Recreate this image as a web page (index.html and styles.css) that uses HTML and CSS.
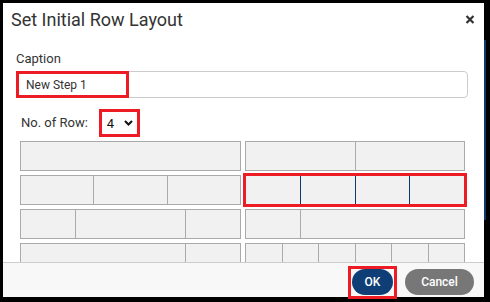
FILE: index.html
```html
<!DOCTYPE html>
<html lang="en">
<head>
    <meta charset="UTF-8">
    <meta name="viewport" content="width=device-width, initial-scale=1.0">
    <title>Set Initial Row Layout</title>
    <link rel="stylesheet" href="styles.css">
</head>
<body>

<div class="page-strip"></div>

<div class="dialog">
    <header class="dialog-header">
        <h1 class="dialog-title">Set Initial Row Layout</h1>
        <button class="close-btn" title="Close">
            <svg width="10" height="9" viewBox="0 0 10 9">
                <path d="M1.5 1 L8.5 8 M8.5 1 L1.5 8" stroke="#333" stroke-width="2.2" fill="none"/>
            </svg>
        </button>
    </header>

    <div class="dialog-body">
        <label class="field-label" for="caption">Caption</label>
        <div class="caption-field">
            <input type="text" id="caption" class="caption-input" value="New Step 1">
            <span class="mark mark-caption"></span>
        </div>

        <div class="rows-field">
            <span class="rows-label">No. of Row:</span>
            <div class="row-select">
                <span>4</span>
                <svg width="9" height="6" viewBox="0 0 9 6">
                    <path d="M1 1 L4.5 4.5 L8 1" stroke="#111" stroke-width="2" fill="none"/>
                </svg>
            </div>
        </div>

        <div class="layout-grid">
            <div class="layout-option">
                <div class="cell"></div>
            </div>
            <div class="layout-option">
                <div class="cell"></div><div class="cell"></div>
            </div>
            <div class="layout-option">
                <div class="cell"></div><div class="cell"></div><div class="cell"></div>
            </div>
            <div class="layout-option selected">
                <div class="cell"></div><div class="cell"></div><div class="cell"></div><div class="cell"></div>
            </div>
            <div class="layout-option">
                <div class="cell"></div><div class="cell w2"></div><div class="cell"></div>
            </div>
            <div class="layout-option">
                <div class="cell"></div><div class="cell w3"></div>
            </div>
            <div class="layout-option">
                <div class="cell w3"></div><div class="cell"></div>
            </div>
            <div class="layout-option">
                <div class="cell"></div><div class="cell"></div><div class="cell"></div>
                <div class="cell"></div><div class="cell"></div><div class="cell"></div>
            </div>
        </div>
    </div>

    <footer class="dialog-footer">
        <span class="btn-wrap">
            <button class="btn btn-ok">OK</button>
            <span class="mark mark-ok"></span>
        </span>
        <button class="btn btn-cancel">Cancel</button>
    </footer>
</div>

</body>
</html>
```

FILE: styles.css
```css
body {
    margin: 0;
    padding: 3px 6px 5px 3px;
    background-color: #000;
    font-family: Roboto, 'Liberation Sans', sans-serif;
    color: #333;
    position: relative;
}

.page-strip {
    position: absolute;
    left: 484px;
    top: 40px;
    width: 2px;
    height: 180px;
    background-color: #0d3a6b;
}

.dialog {
    width: 481px;
    height: 294px;
    background-color: #fff;
    display: flex;
    flex-direction: column;
}

.dialog-header {
    display: flex;
    justify-content: space-between;
    align-items: flex-start;
    padding: 6px 9px 0 8px;
}

.dialog-title {
    margin: 0;
    font-size: 18px;
    font-weight: 400;
    line-height: 22px;
    color: #333;
}

.close-btn {
    border: none;
    background: none;
    padding: 0;
    margin-top: 6px;
    width: 10px;
    height: 9px;
    display: flex;
    cursor: pointer;
}

.dialog-body {
    flex: 1;
    overflow: hidden;
    padding: 20px 16px 0 13px;
}

.field-label {
    display: block;
    font-size: 13px;
    line-height: 16px;
}

.caption-field {
    position: relative;
    margin-top: 4px;
}

.caption-input {
    display: block;
    box-sizing: border-box;
    width: 100%;
    height: 27px;
    border: 1px solid #ccc;
    border-radius: 4px;
    padding: 0 9px;
    font-family: Roboto, 'Liberation Sans', sans-serif;
    font-size: 12px;
    color: #333;
}

.mark {
    position: absolute;
    border: 3px solid #ed1c24;
    box-sizing: border-box;
}

.mark-caption {
    left: 0;
    top: 0;
    width: 113px;
    height: 27px;
}

.rows-field {
    display: flex;
    align-items: center;
    margin-top: 11px;
    padding-left: 5px;
    height: 28px;
}

.rows-label {
    font-size: 13px;
    line-height: 16px;
}

.row-select {
    box-sizing: border-box;
    width: 41px;
    height: 28px;
    margin-left: 11px;
    border: 3px solid #ed1c24;
    display: flex;
    align-items: center;
    justify-content: space-between;
    padding: 0 4px 0 5px;
    font-size: 13px;
    color: #111;
}

.layout-grid {
    display: grid;
    grid-template-columns: 221px 220px;
    grid-auto-rows: 30px;
    gap: 4px;
    margin: 4px 0 0 4px;
}

.layout-option {
    display: flex;
    border: 1px solid #aaa;
    background-color: #f1f1f1;
    box-sizing: border-box;
}

.cell {
    flex: 1;
    border-left: 1px solid #aaa;
}

.cell:first-child {
    border-left: none;
}

.cell.w2 {
    flex: 2;
}

.cell.w3 {
    flex: 3;
}

.layout-option.selected {
    outline: 3px solid #ed1c24;
    outline-offset: -1px;
}

.layout-option.selected .cell {
    border-left-color: #0d3a6b;
}

.layout-option.selected .cell:first-child {
    border-left: none;
}

.dialog-footer {
    height: 35px;
    box-sizing: border-box;
    border-top: 1px solid #ccc;
    background-color: #f8f8f8;
    display: flex;
    align-items: flex-start;
    justify-content: flex-end;
    gap: 12px;
    padding: 6px 10px 0;
}

.btn-wrap {
    position: relative;
    display: flex;
}

.mark-ok {
    left: -4px;
    top: -3px;
    width: 49px;
    height: 33px;
}

.btn {
    height: 26px;
    border: none;
    border-radius: 13px;
    color: #fff;
    font-family: Roboto, 'Liberation Sans', sans-serif;
    font-size: 12px;
    font-weight: 500;
    cursor: pointer;
}

.btn-ok {
    width: 41px;
    background-color: #0e3e75;
}

.btn-cancel {
    width: 69px;
    background-color: #777;
}
```
